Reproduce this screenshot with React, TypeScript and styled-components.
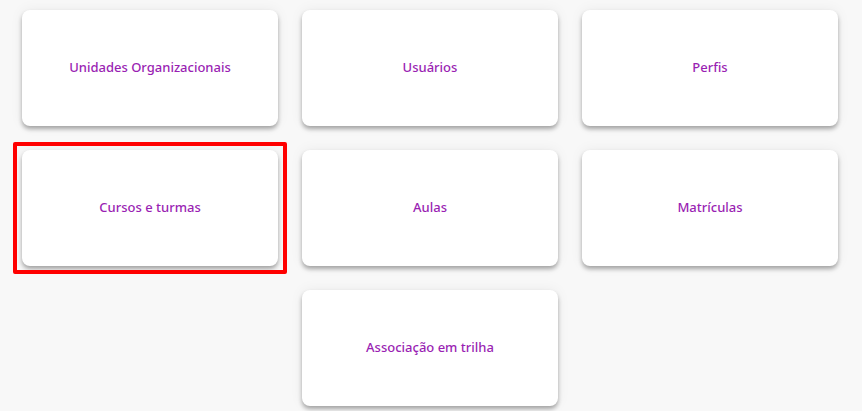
import React from 'react'
import styled, { createGlobalStyle } from 'styled-components'

const GlobalStyle = createGlobalStyle`
  body {
    margin: 0;
    background: #f8f8f8;
    font-family: "Noto Sans", "Open Sans", sans-serif;
  }
`

const items = [
  { label: 'Unidades Organizacionais' },
  { label: 'Usuários' },
  { label: 'Perfis' },
  { label: 'Cursos e turmas', marked: true },
  { label: 'Aulas' },
  { label: 'Matrículas' },
  { label: 'Associação em trilha', col: 2 },
]

const App: React.FC = () => {
  return (
    <>
      <GlobalStyle />
      <Grid>
        {items.map((it) => (
          <Card key={it.label} $marked={it.marked} $col={it.col}>
            <Label>{it.label}</Label>
          </Card>
        ))}
      </Grid>
    </>
  )
}

export default App

const Grid = styled.div`
  display: grid;
  grid-template-columns: repeat(3, 256px);
  grid-auto-rows: 116px;
  column-gap: 24px;
  row-gap: 24px;
  padding: 10px 24px 5px 22px;
`

const Card = styled.div<{ $marked?: boolean; $col?: number }>`
  position: relative;
  grid-column: ${(p) => (p.$col ? p.$col : 'auto')};
  background: #ffffff;
  border-radius: 8px;
  box-shadow: 0 3px 4px rgba(0, 0, 0, 0.32), 0 0 14px rgba(0, 0, 0, 0.06);
  display: flex;
  align-items: center;
  justify-content: center;
  padding-bottom: 2px;
  box-sizing: border-box;
  cursor: pointer;
  &::after {
    content: '';
    display: ${(p) => (p.$marked ? 'block' : 'none')};
    position: absolute;
    left: -9px;
    top: -8px;
    right: -9px;
    bottom: -8px;
    border: 4px solid #ff0000;
    border-radius: 2px;
    pointer-events: none;
  }
`

const Label = styled.span`
  color: #9a1fb3;
  font-size: 13px;
  font-weight: 500;
`
